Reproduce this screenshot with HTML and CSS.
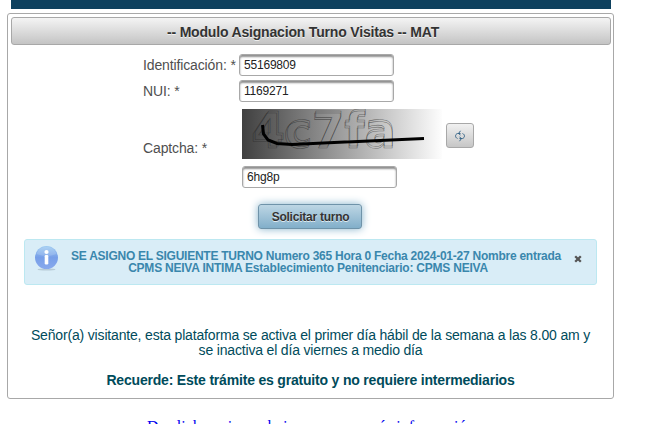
FILE: index.html
```html
<!DOCTYPE html>
<html lang="es">
<head>
<meta charset="utf-8">
<title>Modulo Asignacion Turno Visitas</title>
<link rel="stylesheet" href="styles.css">
</head>
<body>
<div class="banner"></div>
<main class="panel">
  <h1 class="panel-title">-- Modulo Asignacion Turno Visitas -- MAT</h1>
  <form class="form">
    <div class="row"><label class="label" for="ident">Identificación: *</label><input class="field" id="ident" value="55169809"></div>
    <div class="row"><label class="label" for="nui">NUI: *</label><input class="field" id="nui" value="1169271"></div>
    <div class="row captcha-row">
      <label class="label captcha-label" for="captcha">Captcha: *</label>
      <div class="captcha">
        <div class="captcha-top">
          <svg class="captcha-image" width="200" height="50" viewBox="0 0 200 50">
            <defs><linearGradient id="shade" x1="0" y1="0" x2="1" y2="0"><stop offset="0" stop-color="#404040"/><stop offset="1" stop-color="#fdfdfd"/></linearGradient></defs>
            <rect width="200" height="50" fill="url(#shade)"/>
            <g class="glyphs">
              <text x="11" y="36.500" textLength="143" lengthAdjust="spacingAndGlyphs">4c7fa</text>
              <text x="9" y="38.500" textLength="145" lengthAdjust="spacingAndGlyphs">4c7fa</text>
            </g>
            <path d="M20.500 16L21.500 25L26 31L35 34.500L50 35.500L182 29.500" fill="none" stroke="#000" stroke-width="3"/>
          </svg>
          <button class="refresh" type="button" aria-label="Actualizar">
            <svg width="12" height="12" viewBox="0 0 12 12" fill="none" stroke="#38678a"><path d="M3.500 8.500C.8 7.500 1 4.200 3.500 3.500H6.500M6.500 .8L4.500 3.500L6.500 5M8.500 3.500C11.200 4.500 11 7.800 8.500 8.500H5.500M5.500 7L7.500 8.500L5.500 11.200"/></svg>
          </button>
        </div>
        <input class="field" id="captcha" value="6hg8p">
      </div>
    </div>
    <button class="submit" type="button">Solicitar turno</button>
  </form>
  <div class="message">
    <svg class="info" width="26" height="26" viewBox="0 0 26 26">
      <defs><linearGradient id="orb" x1="0" y1="0" x2="0" y2="1"><stop offset="0" stop-color="#9ccaf1"/><stop offset=".5" stop-color="#779fe8"/><stop offset="1" stop-color="#88a9ed"/></linearGradient></defs>
      <ellipse cx="12.500" cy="23.500" rx="9" ry="1" fill="#b7cbd7"/>
      <circle cx="12.500" cy="11.500" r="11.500" fill="url(#orb)"/>
      <path d="M2.500 8A10.500 10.500 0 0 1 22.500 8Q12.500 12 2.500 8Z" fill="#fff" opacity=".16"/>
      <circle cx="12.500" cy="6" r="2.100" fill="#fff"/><rect x="10.700" y="9" width="3.600" height="9.500" rx="1.200" fill="#fff"/>
    </svg>
    <p class="message-text">SE ASIGNO EL SIGUIENTE TURNO Numero 365 Hora 0 Fecha 2024-01-27 Nombre entrada<br><span class="message-tail">CPMS NEIVA INTIMA Establecimiento Penitenciario: CPMS NEIVA</span></p>
    <svg class="close" width="8" height="8" viewBox="0 0 8 8"><path d="M1.200 1.200L6.800 6.800M6.800 1.200L1.200 6.800" stroke="#555" stroke-width="2.300"/></svg>
  </div>
  <p class="notice">Señor(a) visitante, esta plataforma se activa el primer día hábil de la semana a las 8.00 am y<br>se inactiva el día viernes a medio día</p>
  <p class="notice reminder">Recuerde: Este trámite es gratuito y no requiere intermediarios</p>
</main>
<a class="more">De click aqui para bajar <span class="tight">y conocer</span> más información</a>
</body>
</html>
```
FILE: styles.css
```css
* { box-sizing: border-box; }
html { overflow: hidden; }
body {
  margin: 0;
  height: 424px;
  overflow: hidden;
  background: #fff;
  font-family: "Liberation Sans", Arial, sans-serif;
  font-size: 14px;
  color: #4f4f4f;
}
.banner { width: 600px; height: 9px; margin-left: 11px; background: #0e415e; }
.panel {
  width: 607px;
  height: 386px;
  margin: 4px 0 0 7px;
  padding: 3px;
  border: 1px solid #a8a8a8;
  border-radius: 3px;
}
.panel-title {
  width: 600px;
  height: 28px;
  margin: 0;
  padding-right: 16px;
  border: 1px solid #a8a8a8;
  border-radius: 3px;
  background: linear-gradient(#f4f4f4, #c4c4c4);
  color: #333;
  font-size: 14px;
  letter-spacing: -.18px;
  line-height: 28px;
  text-align: center;
  text-shadow: 0 1px 0 rgba(255, 255, 255, .7);
}
.form { padding: 9px 0 0 132px; }
.row { display: flex; align-items: center; height: 22px; margin-bottom: 4px; }
.label { width: 96px; white-space: nowrap; line-height: 16px; letter-spacing: -.13px; }
.field {
  display: block;
  width: 155px;
  height: 22px;
  padding: 0 4px 1px;
  border: 1px solid #a8a8a8;
  border-radius: 3px;
  outline: none;
  background: #fff;
  box-shadow: inset 0 2px 2px #8f8f8f;
  color: #222;
  font: 12px "Liberation Sans", Arial, sans-serif;
  letter-spacing: -.2px;
}
.captcha-row { height: 79px; margin: 7px 0 0; align-items: flex-start; }
.captcha-label { width: 99px; padding-top: 31px; }
.captcha-top { display: flex; align-items: center; gap: 4px; height: 50px; margin-bottom: 7px; }
.captcha-image { display: block; }
.glyphs {
  font: bold 48px "DejaVu Sans", sans-serif;
  fill: none;
  stroke: #222;
  stroke-opacity: .55;
  stroke-width: .6;
}
.refresh {
  display: flex;
  align-items: center;
  justify-content: center;
  width: 28px;
  height: 25px;
  margin-top: 3px;
  padding: 0;
  border: 1px solid #a8a8a8;
  border-radius: 3px;
  background: linear-gradient(#f1f1f1, #c6c6c6);
}
.submit {
  display: block;
  width: 104px;
  height: 25px;
  margin: 16px 0 0 115px;
  padding: 0 0 0 1px;
  border: 1px solid #6f93a9;
  border-radius: 3px;
  background: linear-gradient(#bdd6e4, #82afca);
  box-shadow: 0 0 8px #85b2cb;
  color: #333;
  font: bold 12px/22px "Liberation Sans", Arial, sans-serif;
  letter-spacing: -.25px;
  text-shadow: 0 1px 0 rgba(255, 255, 255, .7);
}
.message {
  display: flex;
  width: 573px;
  height: 46px;
  margin: 10px 0 0 13px;
  padding: 6px 14px 0 9px;
  border: 1px solid #bce8f1;
  border-radius: 3px;
  background: #d9edf7;
}
.message-text {
  flex: 1;
  margin: 4px 0 0;
  padding-right: 2px;
  color: #3a87ad;
  font-size: 12px;
  font-weight: bold;
  letter-spacing: -.25px;
  line-height: 12px;
  text-align: center;
  white-space: nowrap;
}
.message-tail { padding-right: 16px; letter-spacing: -.22px; }
.close { margin-top: 9px; }
.notice { margin: 43px 0 0; color: #004b5b; line-height: 15px; letter-spacing: -.17px; text-align: center; white-space: nowrap; }
.reminder { margin-top: 15px; font-weight: bold; letter-spacing: -.19px; }
.more {
  display: block;
  width: 480px;
  margin: 18px 0 0 147px;
  color: #00e;
  font: 16px/20px "Liberation Serif", "Times New Roman", serif;
  white-space: nowrap;
}
.tight { letter-spacing: -.45px; }
```
